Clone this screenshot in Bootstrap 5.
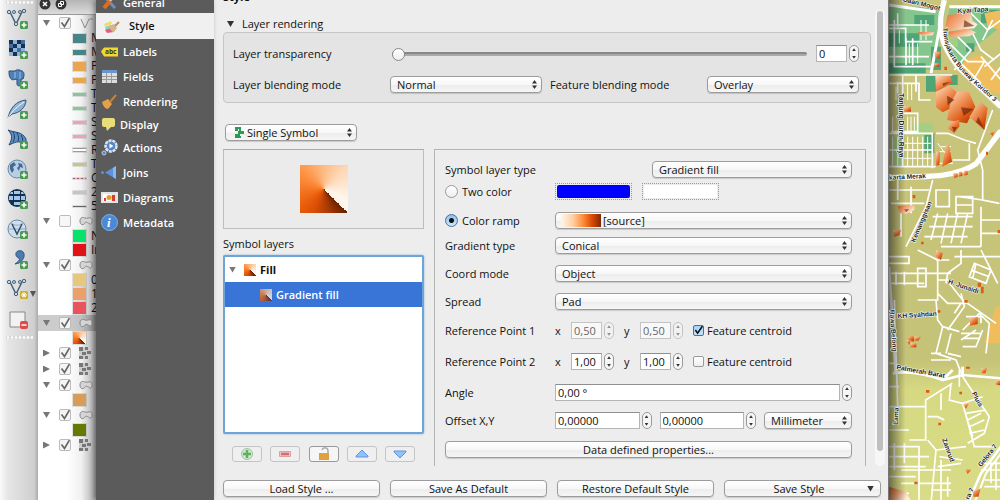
<!DOCTYPE html>
<html lang="en">
<head>
<meta charset="utf-8">
<meta name="viewport" content="width=device-width, initial-scale=1">
<title>Layer Properties - Style</title>
<link rel="stylesheet" href="https://cdn.jsdelivr.net/npm/bootstrap@5.3.0/dist/css/bootstrap.min.css">
<style>
body{font-family:"Open Sans","Noto Sans",sans-serif;font-size:11px;line-height:14px;font-weight:500;color:#111;background:#ededed}
.app{min-height:100vh;overflow:hidden}
label,.nowrap{white-space:nowrap}
/* toolbar */
.tools{width:38px;background:linear-gradient(90deg,#fafafa,#e6e6e6 20%,#cfcfcf 90%,#aaa)}
.tools .grip{height:5px;width:27px;margin-left:6px;background:radial-gradient(circle,#f8f8f8 1px,#ccc 2px,transparent 2px) 0 0/4px 5px}
.tool{border:0;background:none;padding:0;width:36px;height:30px;display:block}
.tool svg{display:block;margin:auto}
/* layer tree */
.tree{width:58px;background:linear-gradient(90deg,transparent 50%,rgba(0,0,0,.06) 75%,rgba(0,0,0,.34)),#fff}
.tree .bar{height:15px;background:linear-gradient(#b4b4b4,#dcdcdc);border-bottom:1px solid #999}
.tree ul{margin:0;padding:0;list-style:none}
.grp{height:16px;padding-left:5px}
.grp.sel{background:rgba(0,0,0,.2)}
.leaf{height:14px;padding-left:35px;gap:5px;font-size:12px}
.grp svg,.leaf i{flex:none}
.leaf i{width:13px;height:var(--h,3px);background:var(--c);outline:1px solid rgba(0,0,0,.1)}
.leaf .big{--h:9px}.leaf .mid{--h:5px}
.leaf .rail{--h:4px;border:solid #999;border-width:1px 0}
.leaf .dots{--h:1px;background:repeating-linear-gradient(90deg,#a57 0 2px,#dbb 2px 4px)}
.leaf .grad,.cone{background:conic-gradient(from 135deg,#6b2002,#a83a03 9%,#dd4f05 20%,#ee6511 30%,#fd8d3c 46%,#fdb67c 60%,#fdd9b8 76%,#fff5eb 94%)}
.leaf .grad{--h:12px}
.tri{width:7px;height:6px;background:#777;clip-path:polygon(0 0,100% 0,50% 100%);flex:none}
.tri.right{clip-path:polygon(0 0,100% 50%,0 100%);height:7px}
.tree input{appearance:none;width:12px;height:12px;margin:0 8px 0 9px;border:1px solid #bbb;border-radius:2px;background:#f7f7f7;flex:none}
.tree input:checked{background:#f4f4f4 url("data:image/svg+xml,%3Csvg xmlns='http://www.w3.org/2000/svg' viewBox='0 0 10 10'%3E%3Cpath d='M1.500 4.500l3 4L9.500 0' fill='none' stroke='%23666' stroke-width='1.700'/%3E%3C/svg%3E")}
/* page list */
.pages{width:118px;background:#5b5b5b;box-shadow:-2px 0 5px rgba(0,0,0,.4);position:relative}
.pages a{height:25px;gap:5px;padding-left:5px;color:#fff;font-weight:600;text-decoration:none}
.pages a svg{width:17px;height:17px;flex:none}
.pages a.first{height:13px;padding-bottom:3px;overflow:hidden;align-items:flex-end}
.pages a.on{height:26px;gap:9px;padding-left:7px;background:#f0f0f0;color:#111}
.pages a.low{height:21px}
.pages .near{gap:2px}
/* properties page */
.props{min-width:0;background:#ededed;padding:0 3px 3px 9px}
.title{height:4px;overflow:hidden}
.box{border:1px solid #c6c6c6;border-radius:4px;background:#e4e4e4;padding:12px 11px 9px 9px}
.ctl,.push,.txt{height:17px;border:1px solid #9c9c9c;font:inherit;color:#111;line-height:14px;min-width:0}
.ctl,.push{border-radius:4px;background:linear-gradient(#fff,#f7f7f7 50%,#ececec 51%,#f6f6f6);box-shadow:0 1px 1px rgba(0,0,0,.15)}
.ctl{appearance:none;padding:0 16px 0 6px;background-image:url("data:image/svg+xml,%3Csvg xmlns='http://www.w3.org/2000/svg' viewBox='0 0 5 9'%3E%3Cpath d='M2.500 0L5 3.500H0zM2.500 9L5 5.500H0z' fill='%23333'/%3E%3C/svg%3E"),linear-gradient(#fff,#f7f7f7 50%,#ececec 51%,#f6f6f6);background-repeat:no-repeat;background-position:right 4px center,0 0;background-size:5px 9px,auto}
.push{padding:0 6px}
.txt{background:#fff;border-color:#8f8f8f #b5b5b5 #b5b5b5;padding:0 2px;border-radius:0;width:31px}
.txt:disabled{color:#666;background:#f8f8f8;border-color:#c4c4c4}
.step{width:10px;height:17px;border:1px solid #999;border-radius:5px;background:#f6f6f6;margin-left:2px;flex:none}
.step button{flex:1;border:0;background:none;padding:0;display:flex;align-items:center;justify-content:center}
.step button::before{content:"";width:4px;height:3px;background:#333;clip-path:polygon(50% 0,100% 100%,0 100%)}
.step button+button::before{clip-path:polygon(0 0,100% 0,50% 100%)}
.step.off{opacity:.5}
.slide{appearance:none;background:none;height:16px;margin:0;min-width:0}
.slide::-webkit-slider-runnable-track{height:4px;border-radius:2px;background:#aaa;border-top:2px solid #888}
.slide::-webkit-slider-thumb{appearance:none;width:13px;height:13px;margin-top:-6px;border-radius:50%;background:linear-gradient(#fff,#eee);border:1px solid #888}
.left{width:201px;flex:none}
.w132{width:132px}.w152{width:152px}.w200{width:200px}.w89{width:88px}.lab{width:110px;flex:none}
.view{height:80px;border:1px solid #bdbdbd;border-top-color:#aaa;background:#ebebeb}
.view .cone{width:48px;height:48px}
.syms{height:179px;background:#fff;border:2px solid #6fa5d4;border-radius:2px;box-shadow:0 0 2px #7db4e4}
.syms li{height:25px}
.syms .cone{width:12px;height:12px}
.syms .hit{background:#3875d7;color:#fff;font-weight:600}
.syms .child{margin-left:35px;opacity:.75}
.mini{width:30px;height:16px;border:1px solid #c4c4c4;border-radius:3px;background:#efefef;padding:0}
.mini.live{border-color:#999;background:#f6f6f6}
.mini svg{display:block;margin:auto}
.panel{border:1px solid #b4b4b4;border-bottom:0;padding:11px 13px 8px 10px;min-width:0}
.line{height:17px}
.t5{margin-top:5px}.t8{margin-top:8px}.t11{margin-top:11px}.t12{margin-top:12px}.t14{margin-top:14px}
.sw{width:77px;height:17px;border:1px dotted #999;background:none;padding:1px}
.sw span{display:block;height:13px;background:var(--c);border-radius:2px}
.rad{appearance:none;width:13px;height:13px;border:1px solid #999;border-radius:50%;background:linear-gradient(#fff,#eee);margin:0;flex:none}
.rad:checked{border-color:#46709f;background:radial-gradient(circle,#111 2px,transparent 3px),linear-gradient(#8fc0ee,#c8e8ff)}
.chk{appearance:none;width:11px;height:11px;border:1px solid #999;border-radius:2px;background:linear-gradient(#fff,#eee);margin:0;flex:none}
.chk:checked{border-color:#46709f;background:url("data:image/svg+xml,%3Csvg xmlns='http://www.w3.org/2000/svg' viewBox='0 0 10 10'%3E%3Cpath d='M1.500 4.500L4 8 9.500 0' fill='none' stroke='%23111' stroke-width='1.800'/%3E%3C/svg%3E"),linear-gradient(#a8d2f8,#c4e4ff)}
.chkwrap{margin-left:10px;gap:3px}
.over{position:absolute;left:9px;top:2px;pointer-events:none}
.ramp{left:6px;width:40px;height:13px;background:linear-gradient(90deg,#fff5eb,#fdd0a2 30%,#fd8d3c 55%,#d94801 78%,#7f2704)}
.track{width:10px;border-radius:5px;background:#f7f7f7;margin-top:10px;padding:1px 2px}
.track div{height:440px;border-radius:4px;background:#bfbfbf}
.foot{display:grid;grid-template-columns:repeat(4,1fr);gap:10px;margin-top:14px;padding-right:4px}
.map{width:112px;position:relative;flex:none;background:#c8c67c;overflow:hidden;border-left:1px solid #777}
.map svg{position:absolute;inset:0;width:100%;height:100%}
</style>
</head>
<body>
<svg width="0" height="0" class="position-absolute" aria-hidden="true">
 <defs>
  <g id="plus"><rect x="14" y="13" width="8" height="8" rx="1.500" fill="#4a9a52"/><path d="M18 14.500v5M15.500 17h5" stroke="#fff" stroke-width="1.600"/></g>
  <g id="vee"><path d="M4 4l6 12 6-12" fill="none" stroke="#44617c" stroke-width="1.500"/><g fill="#c4d8ea" stroke="#44617c"><circle cx="3" cy="4" r="1.700"/><circle cx="8" cy="4" r="1.500"/><circle cx="10" cy="16" r="1.700"/><circle cx="14" cy="4" r="1.500"/><circle cx="18" cy="3" r="1.700"/></g></g>
  <path id="poly" d="M1 5c0-4 3-4 5-3s4-1 6 0 1 7-1 6-4-3-5-1-5 3-5-2z" fill="#d5d5d5" stroke="#888"/>
  <g id="ras"><path fill="#ccc" d="M0 0h12v12H0z"/><path fill="#777" d="M0 0h4v4H0zM6 0h3v3H6zM3 5h4v3H3zM8 4h4v3H8zM0 9h4v3H0zM6 9h3v3H6z"/></g>
 </defs>
</svg>
<div class="app d-flex align-items-stretch">
 <nav class="tools flex-shrink-0" aria-label="Manage layers">
  <div class="grip"></div>
  <button class="tool" aria-label="Add vector layer"><svg width="24" height="24"><use href="#vee"/><use href="#plus"/></svg></button>
  <button class="tool" aria-label="Add raster layer"><svg width="24" height="24"><path fill="#8db3da" d="M3 2h16v16H3z"/><path fill="#17304f" d="M3 2h4v4H3zM11 2h4v4h-4zM7 6h4v4H7zM15 6h4v4h-4zM3 10h4v4H3zM7 14h4v4H7z"/><path fill="#3e6ea5" d="M11 10h4v4h-4zM15 2h4v4h-4zM3 6h4v4H3z"/><use href="#plus"/></svg></button>
  <button class="tool" aria-label="Add PostGIS layer"><svg width="24" height="24"><path d="M3 3h6c2-2 5-1 7 0 3 1 2 6 1 8h-2v5c-1 3-4 2-4 0v-5c-2 1-3 0-4 1-4-1-4-6-4-9z" fill="#4f82b8" stroke="#2b4f78"/><path d="M9 4v6M14 4v7" stroke="#9fc1e2"/><use href="#plus"/></svg></button>
  <button class="tool" aria-label="Add SpatiaLite layer"><svg width="24" height="24"><path d="M2 20C4 10 10 3 20 2c0 7-6 13-14 14z" fill="#8fb3d6" stroke="#38597c"/><path d="M2 20C7 12 12 8 18 4" stroke="#fff" fill="none"/><use href="#plus"/></svg></button>
  <button class="tool" aria-label="Add MSSQL layer"><svg width="24" height="24"><path d="M2 2c7 3 14 1 18 9v6C13 11 8 15 3 17 7 10 6 6 2 2z" fill="#5d8fc4" stroke="#24466d"/><path d="M7 4c2 4 2 6 0 10M11 5c2 4 2 5 1 8M15 7c2 3 2 5 1 7" fill="none" stroke="#1c3c60"/><use href="#plus"/></svg></button>
  <button class="tool" aria-label="Add WMS layer"><svg width="24" height="24"><circle cx="11" cy="11" r="9" fill="#b7cfe6" stroke="#6789ab"/><path d="M4 7l4-3 2 3-3 2 1 3-2 3-2-4zM12 5l4 1 1 4-3-1-1 4-2-3 2-2z" fill="#46688c"/><use href="#plus"/></svg></button>
  <button class="tool" aria-label="Add WCS layer"><svg width="24" height="24"><circle cx="11" cy="10" r="9" fill="#14304f"/><g fill="#a4c6e8"><path d="M8 3h6v3H8zM3 8h4v4H3zM8 8h6v4H8zM15 8h4v4h-4zM8 14h6v3H8zM5 4h2v2H4zM15 4h2l1 2h-3z"/></g><use href="#plus"/></svg></button>
  <button class="tool" aria-label="Add WFS layer"><svg width="24" height="24"><circle cx="11" cy="11" r="9" fill="#cfdeeb" stroke="#6789ab"/><path d="M2 11h18M5 5c4 3 8 3 12 0" fill="none" stroke="#91aac2"/><path d="M6 6l5 10 5-10" fill="none" stroke="#314e6b" stroke-width="1.500"/><use href="#plus"/></svg></button>
  <button class="tool" aria-label="Add delimited text layer"><svg width="24" height="24"><path d="M12 3c7-2 9 7 1 12l-4 1c4-3 5-4 4-6-4-1-4-6-1-7z" fill="#4d7db0" stroke="#2f5684"/><use href="#plus"/></svg></button>
  <button class="tool" aria-label="New layer"><svg width="36" height="24"><g transform="translate(6)"><use href="#vee"/><rect x="14" y="13" width="8" height="8" rx="1.500" fill="#c9ad2c"/><path d="M18 14v6M15 17h6M16 15l4 4M20 15l-4 4" stroke="#fff"/></g><path d="M30 13h6l-3 6z" fill="#555"/></svg></button>
  <button class="tool" aria-label="Remove layer"><svg width="24" height="24"><path d="M4 4h15v15H4z" fill="#f2f2f0" stroke="#888"/><rect x="14" y="13" width="8" height="8" rx="2" fill="#e04a4a"/><path d="M15.500 17h5" stroke="#fff" stroke-width="1.500"/></svg></button>
  <div class="grip"></div>
 </nav>
 <aside class="tree flex-shrink-0 overflow-hidden" aria-label="Layers">
  <div class="bar"><svg class="d-block" width="40" height="11"><circle cx="7" cy="4" r="5.500" fill="#333"/><circle cx="23" cy="4" r="5.500" fill="#333"/><path d="M5 2l4 4M9 2L5 6" stroke="#fff" stroke-width="1.500"/><path d="M22.500 1.500h3v3h-3zM20.500 3.500h3v3h-3z" fill="#333" stroke="#fff"/></svg></div>
  <ul>
   <li class="grp d-flex align-items-center"><span class="tri"></span><input type="checkbox" checked aria-label="Lines"><svg width="14" height="14" fill="none" stroke="#888"><path d="M2 3l4 9 4-9h4"/></svg></li>
   <li class="leaf d-flex align-items-center nowrap"><i class="big" style="--c:#468487"></i>M</li>
   <li class="leaf d-flex align-items-center nowrap"><i class="mid" style="--c:#468487"></i>M</li>
   <li class="leaf d-flex align-items-center nowrap"><i class="big" style="--c:#e9a650"></i>P</li>
   <li class="leaf d-flex align-items-center nowrap"><i class="mid" style="--c:#e9a650"></i>P</li>
   <li class="leaf d-flex align-items-center nowrap"><i style="--c:#85c796"></i>T</li>
   <li class="leaf d-flex align-items-center nowrap"><i style="--c:#85c796"></i>T</li>
   <li class="leaf d-flex align-items-center nowrap"><i style="--c:#f0a2af"></i>S</li>
   <li class="leaf d-flex align-items-center nowrap"><i style="--c:#f0a2af"></i>S</li>
   <li class="leaf d-flex align-items-center nowrap"><i class="rail" style="--c:#fff"></i>R</li>
   <li class="leaf d-flex align-items-center nowrap"><i style="--c:#c5c586"></i>T</li>
   <li class="leaf d-flex align-items-center nowrap"><i class="dots"></i>C</li>
   <li class="leaf d-flex align-items-center nowrap"><i style="--c:#c4c4c4"></i>2</li>
   <li class="leaf d-flex align-items-center nowrap"><i style="--c:#666;--h:1px"></i>5</li>
   <li class="grp d-flex align-items-center"><span class="tri"></span><input type="checkbox" aria-label="Areas"><svg width="14" height="10"><use href="#poly"/></svg></li>
   <li class="leaf d-flex align-items-center nowrap"><i style="--c:#08e26b;--h:12px"></i>N</li>
   <li class="leaf d-flex align-items-center nowrap"><i style="--c:#e01218;--h:12px"></i>Ir</li>
   <li class="grp d-flex align-items-center"><span class="tri"></span><input type="checkbox" checked aria-label="Classes"><svg width="14" height="10"><use href="#poly"/></svg></li>
   <li class="leaf d-flex align-items-center nowrap"><i style="--c:#e5c87c;--h:12px"></i>0</li>
   <li class="leaf d-flex align-items-center nowrap"><i style="--c:#eb9f6b;--h:12px"></i>1</li>
   <li class="leaf d-flex align-items-center nowrap"><i style="--c:#e8535d;--h:12px"></i>2</li>
   <li class="grp sel d-flex align-items-center"><span class="tri"></span><input type="checkbox" checked aria-label="Buildings"><svg width="14" height="10"><use href="#poly"/></svg></li>
   <li class="leaf d-flex align-items-center"><i class="grad"></i></li>
   <li class="grp d-flex align-items-center"><span class="tri right"></span><input type="checkbox" checked aria-label="Raster 1"><svg width="12" height="12"><use href="#ras"/></svg></li>
   <li class="grp d-flex align-items-center"><span class="tri right"></span><input type="checkbox" checked aria-label="Raster 2"><svg width="12" height="12"><use href="#ras"/></svg></li>
   <li class="grp d-flex align-items-center"><span class="tri"></span><input type="checkbox" checked aria-label="Blocks"><svg width="14" height="10"><use href="#poly"/></svg></li>
   <li class="leaf d-flex align-items-center"><i style="--c:#d69c58;--h:12px"></i></li>
   <li class="grp d-flex align-items-center"><span class="tri"></span><input type="checkbox" checked aria-label="Parks"><svg width="14" height="10"><use href="#poly"/></svg></li>
   <li class="leaf d-flex align-items-center"><i style="--c:#667a00;--h:12px"></i></li>
   <li class="grp d-flex align-items-center"><span class="tri right"></span><input type="checkbox" checked aria-label="Raster 3"><svg width="12" height="12"><use href="#ras"/></svg></li>
  </ul>
 </aside>
 <nav class="pages flex-shrink-0" aria-label="Property pages">
  <a href="#" class="first d-flex"><svg viewBox="0 0 17 17"><path d="M3 3l11 12" stroke="#6d8fb5" stroke-width="3"/><path d="M14 3L8 9" stroke="#ccc" stroke-width="2"/><path d="M9 8l-6 7" stroke="#e06d1b" stroke-width="4"/></svg>General</a>
  <a href="#" class="on d-flex align-items-center"><svg viewBox="0 0 17 17"><path d="M1 6l7-3 1 3-7 3z" fill="#f2dc6b"/><path d="M2 9l6-2 1 4-6 2z" fill="#8bd0c4"/><path d="M2 12l7-2 2 4-7 1z" fill="#e85a7d"/><path d="M6 8l5-2 3 4-3 4c-2 0-4-2-5-6z" fill="#d8b48a"/><path d="M12 8l4-4" stroke="#b98a58" stroke-width="2"/></svg>Style</a>
  <a href="#" class="d-flex align-items-center"><svg viewBox="0 0 17 17"><path d="M0 8.500l3-4h14v9H3z" fill="#f3d62e"/><text x="4" y="11" font-size="6.500" font-weight="700" fill="#333">abc</text></svg>Labels</a>
  <a href="#" class="d-flex align-items-center"><svg viewBox="0 0 17 17"><path d="M1 2h15v13H1z" fill="#ddd"/><path d="M1 2h15v3H1z" fill="#6b95cf"/><path d="M1 8.500h15M1 11.500h15M5.500 5v10M10.500 5v10" stroke="#999"/></svg>Fields</a>
  <a href="#" class="d-flex align-items-center"><svg viewBox="0 0 17 17"><path d="M1 9l6-3 4 5-4 5c-3 0-5-3-6-7z" fill="#e5a148"/><path d="M9 9l6-7" stroke="#c9832c" stroke-width="2"/></svg>Rendering</a>
  <a href="#" class="d-flex align-items-center low near"><svg viewBox="0 0 17 17"><rect x="1" y="2" width="13" height="9" rx="2" fill="#e8dd78"/><path d="M5 11h5l-4 4z" fill="#e8dd78"/></svg>Display</a>
  <a href="#" class="d-flex align-items-center"><svg viewBox="0 0 17 17"><circle cx="10" cy="7" r="5.500" fill="#5687c2" stroke="#dbe7f3" stroke-width="2.500" stroke-dasharray="3 .8"/><path d="M8.500 4.500v5l4-2.500z" fill="#fff"/><circle cx="3" cy="14" r="2" fill="#5687c2" stroke="#b7cbe0"/></svg>Actions</a>
  <a href="#" class="d-flex align-items-center"><svg viewBox="0 0 17 17"><path d="M4 8.500L15 2v13z" fill="#5b93dc"/><path d="M12 4l3-2v13l-3-2z" fill="#8ab6ee"/><circle cx="1.500" cy="8.500" r="1.500" fill="#5b93dc"/></svg>Joins</a>
  <a href="#" class="d-flex align-items-center"><svg viewBox="0 0 17 17"><path d="M0 3h17v11H0z" fill="#e4e4e4"/><path d="M2 5h8v7H2z" fill="#fff"/><path d="M3 9h2v3H3zM11 6h3v6h-3z" fill="#d93d32"/><circle cx="8" cy="8.500" r="2.500" fill="#e59b30"/></svg>Diagrams</a>
  <a href="#" class="d-flex align-items-center"><svg viewBox="0 0 17 17"><circle cx="8.500" cy="8.500" r="8" fill="#4b89d6" stroke="#7fb0ea"/><text x="6" y="13" font-family="Liberation Serif,serif" font-style="italic" font-weight="700" font-size="13" fill="#fff">i</text></svg>Metadata</a>
 </nav>
 <main class="props flex-grow-1">
  <div class="d-flex">
   <div class="flex-grow-1 overflow-hidden">
    <div class="title d-flex align-items-end fw-bold">Style</div>
    <div class="d-flex align-items-center mb-0" style="height:28px;padding:12px 0 0 4px"><span class="tri me-2" style="background:#333"></span>Layer rendering</div>
    <div class="box">
     <div class="d-flex align-items-center line"><label for="tr" style="width:159px">Layer transparency</label><input id="tr" type="range" class="slide flex-grow-1" value="0"><input class="txt" style="margin-left:9px" value="0" aria-label="Transparency value"><span class="step d-flex flex-column"><button aria-label="Up"></button><button aria-label="Down"></button></span></div>
     <div class="d-flex align-items-center line t14"><label for="lb" style="width:157px">Layer blending mode</label><select id="lb" class="ctl w152"><option>Normal</option></select><label for="fb" class="ms-2">Feature blending mode</label><select id="fb" class="ctl w152 ms-auto"><option>Overlay</option></select></div>
    </div>
    <div class="position-relative d-inline-block" style="margin:21px 0 0 2px"><select class="ctl w132 d-block" style="padding-left:21px" aria-label="Renderer"><option>Single Symbol</option></select><svg class="over" width="11" height="13"><path d="M1 1h6v4H1zM4 5h6v3H4zM1 8h6v4H1z" fill="#2a9a55"/><path d="M4 4h1M6 9h1" stroke="#fff" stroke-width="2"/></svg></div>
    <div class="d-flex" style="gap:10px;padding:8px 5px 0 0">
     <section class="left">
      <div class="view d-flex align-items-center justify-content-center"><div class="cone"></div></div>
      <div class="pt-2 pb-1">Symbol layers</div>
      <ul class="syms list-unstyled mb-0">
       <li class="d-flex align-items-center fw-bold"><span class="tri ms-1 me-2"></span><span class="cone me-1"></span>Fill</li>
       <li class="hit d-flex align-items-center"><span class="cone child me-1"></span>Gradient fill</li>
      </ul>
      <div class="d-flex justify-content-between" style="padding:12px 9px 0">
       <button class="mini" aria-label="Add"><svg width="14" height="14"><circle cx="7" cy="7" r="5.500" fill="#cfe8cf" stroke="#9cc79c"/><path d="M7 3v8M3 7h8" stroke="#62ae66" stroke-width="2.500"/></svg></button>
       <button class="mini" aria-label="Remove"><svg width="14" height="14"><path d="M1.500 4.500h11v5h-11z" fill="#f3c4c4" stroke="#dba0a0"/><path d="M3 7h8" stroke="#cf6f74" stroke-width="2.500"/></svg></button>
       <button class="mini live" aria-label="Lock"><svg width="14" height="14"><path d="M5 3C6 0 11 0 11 4v3" fill="none" stroke="#aaa" stroke-width="1.500"/><path d="M2 6h10v7H2z" fill="#e2a03c"/></svg></button>
       <button class="mini" aria-label="Move up"><svg width="14" height="14"><path d="M7 3l6 6v1H1V9z" fill="#91c0fa" stroke="#6095e2"/></svg></button>
       <button class="mini" aria-label="Move down"><svg width="14" height="14"><path d="M7 11l6-6V4H1v1z" fill="#91c0fa" stroke="#6095e2"/></svg></button>
      </div>
     </section>
     <section class="panel flex-grow-1">
      <div class="line d-flex align-items-center justify-content-between"><label for="st">Symbol layer type</label><select id="st" class="ctl w200"><option>Gradient fill</option></select></div>
      <div class="line t5 d-flex align-items-center"><span class="lab d-flex align-items-center gap-1"><input type="radio" class="rad" name="col" id="two"><label for="two">Two color</label></span><button class="sw" aria-label="First color"><span style="--c:#00f"></span></button><button class="sw" style="margin-left:10px" aria-label="Second color"><span style="--c:#fff"></span></button></div>
      <div class="line t12 d-flex align-items-center"><span class="lab d-flex align-items-center gap-1"><input type="radio" class="rad" name="col" id="ra" checked><label for="ra">Color ramp</label></span><span class="position-relative flex-grow-1"><select class="ctl w-100 d-block" style="padding-left:47px" aria-label="Ramp"><option>[source]</option></select><span class="over ramp"></span></span></div>
      <div class="line t8 d-flex align-items-center"><label class="lab" for="gt">Gradient type</label><select id="gt" class="ctl flex-grow-1"><option>Conical</option></select></div>
      <div class="line t11 d-flex align-items-center"><label class="lab" for="cm">Coord mode</label><select id="cm" class="ctl flex-grow-1"><option>Object</option></select></div>
      <div class="line t11 d-flex align-items-center"><label class="lab" for="sp">Spread</label><select id="sp" class="ctl flex-grow-1"><option>Pad</option></select></div>
      <div class="line t12 d-flex align-items-center"><span class="lab">Reference Point 1</span><label for="x1" style="width:16px">x</label><input id="x1" class="txt" value="0,50" disabled><span class="step off d-flex flex-column"><button aria-label="Up"></button><button aria-label="Down"></button></span><label for="y1" style="width:16px;margin-left:10px">y</label><input id="y1" class="txt" value="0,50" disabled><span class="step off d-flex flex-column"><button aria-label="Up"></button><button aria-label="Down"></button></span><span class="chkwrap d-flex align-items-center"><input id="f1" type="checkbox" class="chk" checked><label for="f1">Feature centroid</label></span></div>
      <div class="line t14 d-flex align-items-center"><span class="lab">Reference Point 2</span><label for="x2" style="width:16px">x</label><input id="x2" class="txt" value="1,00"><span class="step d-flex flex-column"><button aria-label="Up"></button><button aria-label="Down"></button></span><label for="y2" style="width:16px;margin-left:10px">y</label><input id="y2" class="txt" value="1,00"><span class="step d-flex flex-column"><button aria-label="Up"></button><button aria-label="Down"></button></span><span class="chkwrap d-flex align-items-center"><input id="f2" type="checkbox" class="chk"><label for="f2">Feature centroid</label></span></div>
      <div class="line t14 d-flex align-items-center"><label class="lab" for="an">Angle</label><input id="an" class="txt flex-grow-1" value="0,00 °"><span class="step d-flex flex-column"><button aria-label="Up"></button><button aria-label="Down"></button></span></div>
      <div class="line t11 d-flex align-items-center"><label class="lab" for="ox">Offset X,Y</label><input id="ox" class="txt flex-grow-1" value="0,00000"><span class="step d-flex flex-column"><button aria-label="Up"></button><button aria-label="Down"></button></span><input class="txt flex-grow-1 ms-2" value="0,00000" aria-label="Offset Y"><span class="step d-flex flex-column"><button aria-label="Up"></button><button aria-label="Down"></button></span><select class="ctl w89 ms-2" aria-label="Unit"><option>Millimeter</option></select></div>
      <button class="push w-100 t12 d-block">Data defined properties...</button>
     </section>
    </div>
   </div>
   <div class="track ms-1 flex-shrink-0 align-self-stretch"><div></div></div>
  </div>
  <div class="foot"><button class="push">Load Style ...</button><button class="push">Save As Default</button><button class="push">Restore Default Style</button><button class="push d-flex align-items-center"><span class="flex-grow-1">Save Style</span><span class="tri" style="background:#333"></span></button></div>
 </main>
 <div class="map">
  <svg viewBox="24 0 336 1500" preserveAspectRatio="xMinYMin slice" role="img" aria-label="City map">
   <defs>
    <linearGradient id="o" x1="0" y1="0" x2=".8" y2="1"><stop offset="0" stop-color="#fde0c6"/><stop offset=".4" stop-color="#f09a63"/><stop offset=".75" stop-color="#df5a17"/><stop offset="1" stop-color="#b03c08"/></linearGradient>
    <linearGradient id="w" x1="0" y1="0" x2="1" y2=".6"><stop offset="0" stop-color="#e06a2c"/><stop offset=".5" stop-color="#f3a678"/><stop offset="1" stop-color="#fdeedd"/></linearGradient>
    <linearGradient id="sh"><stop offset="0" stop-opacity=".5"/><stop offset="1" stop-opacity="0"/></linearGradient>
    <linearGradient id="gnd" x2="0" y2="1"><stop offset="0" stop-color="#c9c67c"/><stop offset=".72" stop-color="#c5c377"/><stop offset=".78" stop-color="#d6d982"/><stop offset="1" stop-color="#d8dc86"/></linearGradient>
   </defs>
   <path fill="url(#gnd)" d="M0 0h400v1500H0z"/>
   <path fill="#85c68c" d="M24 20h170l-30 190H24zM205 20h155v60l-90 70-30 60-50-60z"/>
   <path fill="#4fa576" d="M24 100h90v40H24zM150 140h30v70h-30zM100 45h60v30h-60zM300 30h60v40h-60zM255 130h25v25h-25zM135 225h30v50h-30zM160 225h70v30h-70zM24 190h110v30H24zM130 400h30v60h-30z"/>
   <path fill="#efbd5c" d="M310 40l50-10v60l-40-10zM250 180l50-15 60 60v60l-60-20-60-50zM345 920l15 0v110h-50z"/>
   <path fill="#a5cd83" d="M95 370h60v35H95zM190 90h40v50h-40zM30 410h30v90H30z"/>
   <g fill="none" stroke="#fff" stroke-width="5">
    <path d="M24 85h50v40h80M40 60v140h110M24 75h120M75 115v80M95 115v80M24 170h120M50 40v40M24 225h190M24 250h90v50h35M65 225v60M105 225v50M65 340h45v55h-80M24 400h130v105M65 395v105M24 450h130M24 500h140M50 245v35"/>
    <path d="M200 125l60 60 50 0-30 50M230 110l40 40-50 60M260 30l60 60 40-30M300 170l60 70M270 90l30 60 40 30M305 120l30-60M310 200l50-40M330 240l30-40M240 190l60 60"/>
    <path d="M165 400h35l50 20 35 10M265 430v50h-50M335 330l-45 120 15 60 0 90 50 10M305 600l-70-10M155 540l-20 80-60 120M50 530v70M90 560v80M24 570h120M30 610h100M60 640v70M165 570h40v50h-40zM225 590h50v50h-50zM225 615h50M155 650h120M145 680h130M130 710h130M170 640l-20 80M200 640l-20 90M230 640l-20 90M260 640l-20 90M300 620v120M300 660h60M300 700h60M180 740h120"/>
    <path d="M24 770h60v20H24M110 750l60 30v120l-60 0M30 820h180M30 850h100M110 805h25v55h-25zM165 780l40 0M70 815v40M45 815v40M170 820h40M170 840h40M170 880l30 30 60 0M240 750l0 40-40 30-5 30M205 850l40 50 100 70M220 770l140 0M300 750l50 100M280 790l50 20-15 40-50-20zM270 810l55 20M285 790l-10 45"/>
    <path d="M165 900l5 60 15 20-20 80 60 20 20 50M200 990l50-70-10-40M185 980l50 15M220 940l20-30M210 1000l-15 60M245 990l50-50 30 30-10 90M245 1040h40l20-50M240 1020l45-30M200 1060l40 10M150 1080h60M150 1060h30M240 1000h60M245 1015h50M255 950h45v20"/>
    <path d="M40 900l10 320M24 1090h25M24 1160h30M24 1220h110v100H85M134 1220v-20l80-50M140 1250h30l20 10M180 1180v50M24 1225l-10 80M24 1290h60M210 1150l-5 50 40 10 35 130h60M245 1130l80 120-15 50-50 30M235 1110l0 50M245 1210l60-20M255 1240l60-10M260 1260l40-20M265 1280l45-20M265 1300l45-10M250 1230l25 80"/>
    <path d="M24 1340h90v170M24 1370h120M40 1330v80M70 1330v60M24 1400h110M24 1430h80M140 1320l25 30-15 160M60 1450h150M150 1470h60M60 1410h150M180 1380v130M200 1430v60M165 1350l90-10M175 1370l70 10M170 1400l70-10M24 1480h60"/>
    <path d="M310 1390h50M300 1410h60M310 1440h50M330 1390v60M310 1460h50M345 1380v90"/>
   </g>
   <g fill="none" stroke="#fff" stroke-width="3"><path d="M40 130v60M55 90v40M85 130v60M110 130v60M120 60v60M135 60v60M45 260v40M80 250v50M92 250v50M35 350v50M80 350v45M90 350v45M100 350v45M80 410v90M95 410v90M110 410v90M125 410v90M140 410v90M35 410v90M50 410v90M70 430h80M70 475h80M170 430l45 60M180 440h30M175 455h35M170 490h45"/></g>
   <g fill="none" stroke="#fff">
    <path d="M190 0c-25 90-10 130 40 200l130 120" stroke-width="16"/><path d="M185 0c-30 100-5 150 45 210l130 125" stroke="#ddd" stroke-width="1"/>
    <path d="M24 532c120-2 200 0 260-40l76-100" stroke-width="16"/><path d="M180 60l-30 160M205 20h155M24 15l140 20" stroke-width="9"/>
    <path d="M35 1120c60-10 110 5 150 20l60-15 115 10M245 1130v-30M185 1140l30-30" stroke-width="8"/>
    <path d="M24 800l20 320M360 1340l-60 80-40 90" stroke-width="8"/><path d="M375 1340l-60 80-35 90" stroke-width="6"/>
   </g>
   <g fill="url(#w)">
    <path d="M200 45l45-5 0-12 25 10 5 25 15 10-10 12-75 8-12-15z"/><path d="M203 95l60-8 22 10-20 12-60 2z"/><path d="M110 96l50 0-5 10-30 2z"/><path d="M50 618l50-2 0 14-25 12-20-4z"/><path d="M24 1460l50 15 15 25H24z"/>
   </g>
   <g fill="url(#o)">
    <path d="M163 228l45 0 7 20-50 28z"/><path d="M165 275l40-18 35 30-15 30-40 20-20-15z"/><path d="M208 310l20-35 35 0 20 45-25 50-60-10z"/><path d="M265 350l35-45 20 20-10 65z"/><path d="M200 385l10-18 25-8 0 20-15 20z"/><path d="M165 455l12 0-2 40-10 2z"/><path d="M195 435h10l8 50-30 15z"/>
    <path d="M160 155h20l-5 22-12-5z"/><path d="M160 190h15v10h-15z"/><path d="M70 320h20v15H70z"/><path d="M320 395h20l-5 12z"/><path d="M215 520l15 0 0 10-10 5z"/><path d="M232 515l12 0 0 12-10 3z"/><path d="M248 512l12 0 0 12-10 3z"/><path d="M35 690l25 0-5 15-15 5z"/><path d="M165 750l20 10-5 20-15-10z"/>
    <path d="M265 955l25-5 0 22-22 5z"/><path d="M85 1005l15 5-2 15-18-5z"/><path d="M100 1010h20l-8 12h-12z"/><path d="M75 1020l15 0-5 15z"/><path d="M88 1030h18v12H88z"/><path d="M300 1105l18 0-5 15-10 0z"/><path d="M343 1142l15 0 0 14-12-2z"/><path d="M245 1212h18l-8 14z"/><path d="M250 1405l20 5-10 12z"/><path d="M275 1475l25-10-8 25-15 0z"/>
   </g>
   <path fill="#df5a17" d="M290 848h10v12h-10zM250 900h10v8h-10zM300 860h8v20h-8zM135 1170h10v8h-10zM235 1175h8v8h-8zM172 1268h8v8h-8zM100 1445h10v8h-10zM350 690h8v10h-8zM120 725h8v8h-8zM95 585h8v10h-8zM315 455h6v10h-6zM255 1100h12v6h-12zM170 930h8v8h-8zM190 200h8v10h-8z"/>
   <path fill="#5b1c05" opacity=".6" d="M250 60l30 18-32 4zM185 250l22-5-20 14zM198 287l22 12-20 17zM240 322l38 5-30 20zM292 350l15 32-22-15zM212 380l16 2-8 12zM70 628l15 0-10 9z"/>
   <path fill="url(#sh)" d="M24 0h50v1500H24z"/>
   <g font-family="Liberation Sans,sans-serif" font-weight="700" font-size="20" fill="#222" stroke="#fff" stroke-width="3" paint-order="stroke">
    <text transform="translate(65 4) rotate(14)">Daan Mogot</text>
    <text transform="translate(230 40) rotate(-4)">Kyai Tapa</text>
    <path id="bus" d="M186 84C190 170 230 210 330 296L380 340" fill="none" stroke="none"/>
    <text font-size="19"><textPath href="#bus">Transjakarta Busway Koridor 3</textPath></text>
    <text transform="translate(53 280) rotate(90)">Tanjung Duren Raya</text>
    <text transform="translate(24 540) rotate(-3)">karta Merak</text>
    <text transform="translate(102 728) rotate(-67)">Kemanggisan</text>
    <text transform="translate(200 850) rotate(19)">H. Junaidi</text>
    <text transform="translate(50 955) rotate(-4)">KH Syahdan</text>
    <text transform="translate(26 930) rotate(86)">Rawa Belong</text>
    <text transform="translate(46 1108) rotate(10)">Palmerah Barat</text>
    <text transform="translate(272 1180) rotate(62)">Pluis</text>
    <text transform="translate(50 1275) rotate(-87)">Lama</text>
    <text transform="translate(183 1318) rotate(70)">Zamrud</text>
    <text transform="translate(300 1402) rotate(-52)">Gelora 7</text>
    <text transform="translate(264 1500) rotate(-65)">ra 7</text>
   </g>
  </svg>
 </div>
</div>
<script src="https://cdn.jsdelivr.net/npm/bootstrap@5.3.0/dist/js/bootstrap.bundle.min.js"></script>
</body>
</html>
